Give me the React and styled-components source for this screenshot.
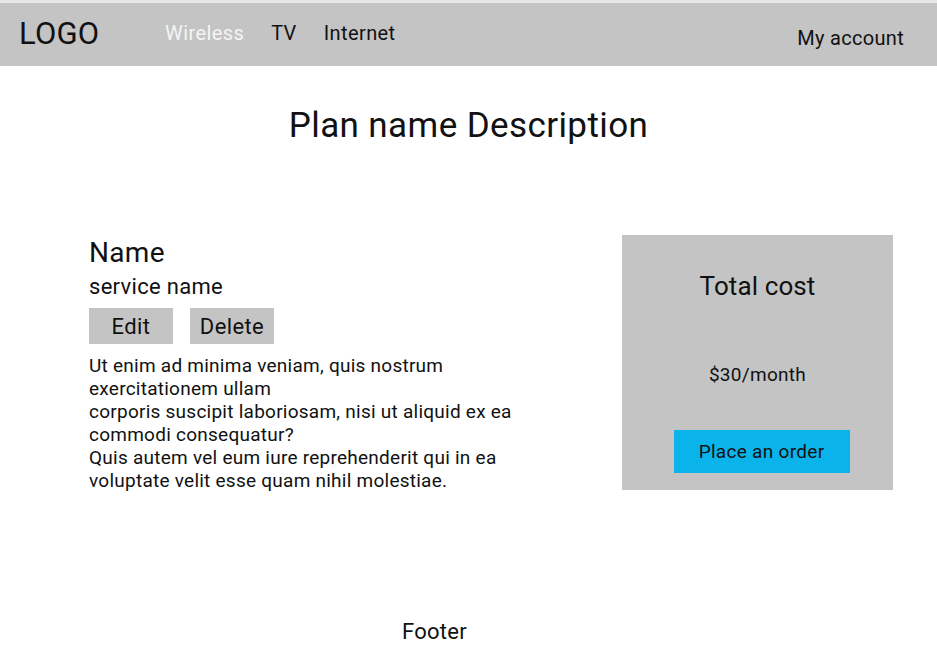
import React from "react";
import styled, { createGlobalStyle } from "styled-components";

const GlobalStyle = createGlobalStyle`
  html, body {
    margin: 0;
    padding: 0;
    background: #ffffff;
    font-family: Roboto, "Liberation Sans", sans-serif;
    color: #111;
  }
`;

const Page = styled.div`
  width: 937px;
  min-height: 671px;
  display: flex;
  flex-direction: column;
  border-top: 3px solid #e6e6e6;
  box-sizing: border-box;
`;

const Header = styled.header`
  height: 63px;
  background: #c4c4c4;
  display: flex;
  align-items: center;
  padding: 0 33px 0 19px;
`;

const Logo = styled.div`
  font-size: 31px;
  letter-spacing: 0.2px;
  width: 146px;
  margin-top: -2px;
`;

const Nav = styled.nav`
  display: flex;
  gap: 27px;
  flex: 1;
  margin-top: -3px;
`;

const NavLink = styled.a`
  font-size: 20px;
  letter-spacing: 0.4px;
  text-decoration: none;
  color: ${(p) => (p.$active ? "#f4f4f4" : "#111")};
`;

const Account = styled.a`
  font-size: 20px;
  letter-spacing: 0.3px;
  color: #111;
  text-decoration: none;
  margin-top: 6px;
`;

const Title = styled.h1`
  margin: 39px 0 0;
  font-weight: 400;
  font-size: 35px;
  letter-spacing: 0.4px;
  text-align: center;
`;

const Main = styled.main`
  display: flex;
  justify-content: space-between;
  padding: 0 44px 0 89px;
  margin-top: 90px;
`;

const Details = styled.section`
  display: flex;
  flex-direction: column;
`;

const Name = styled.h2`
  margin: 0;
  font-size: 28px;
  letter-spacing: 0.3px;
  font-weight: 400;
  line-height: 34px;
`;

const Service = styled.div`
  font-size: 22px;
  letter-spacing: 0.3px;
  line-height: 26px;
  margin-top: 4px;
`;

const Actions = styled.div`
  display: flex;
  gap: 17px;
  margin-top: 8px;
`;

const Action = styled.button`
  width: 84px;
  height: 36px;
  border: none;
  background: #c4c4c4;
  font-family: inherit;
  font-size: 22px;
  letter-spacing: 0.4px;
  color: #111;
  padding: 0;
`;

const Text = styled.p`
  margin: 10px 0 0;
  font-size: 19px;
  letter-spacing: 0.25px;
  line-height: 23px;
`;

const CostCard = styled.aside`
  width: 271px;
  height: 255px;
  background: #c4c4c4;
  display: flex;
  flex-direction: column;
  align-items: center;
  box-sizing: border-box;
  padding-top: 36px;
  margin-top: -1px;
`;

const CostTitle = styled.div`
  font-size: 26px;
  letter-spacing: 0.1px;
  line-height: 30px;
`;

const Price = styled.div`
  font-size: 19px;
  letter-spacing: 0.3px;
  margin-top: 63px;
  line-height: 22px;
`;

const OrderButton = styled.button`
  margin: 44px 0 0 8px;
  width: 176px;
  height: 43px;
  border: none;
  background: #0ab3ea;
  font-family: inherit;
  font-size: 19px;
  letter-spacing: 0.3px;
  color: #111;
  padding: 0;
`;

const Footer = styled.footer`
  margin-top: auto;
  padding: 0 68px 27px 0;
  text-align: center;
  font-size: 22px;
  letter-spacing: 0.3px;
`;

const App = () => {
  return (
    <>
      <GlobalStyle />
      <Page>
        <Header>
          <Logo>LOGO</Logo>
          <Nav>
            <NavLink href="#" $active>Wireless</NavLink>
            <NavLink href="#">TV</NavLink>
            <NavLink href="#">Internet</NavLink>
          </Nav>
          <Account href="#">My account</Account>
        </Header>

        <Title>Plan name Description</Title>

        <Main>
          <Details>
            <Name>Name</Name>
            <Service>service name</Service>
            <Actions>
              <Action>Edit</Action>
              <Action>Delete</Action>
            </Actions>
            <Text>
              Ut enim ad minima veniam, quis nostrum
              <br />
              exercitationem ullam
              <br />
              corporis suscipit laboriosam, nisi ut aliquid ex ea
              <br />
              commodi consequatur?
              <br />
              Quis autem vel eum iure reprehenderit qui in ea
              <br />
              voluptate velit esse quam nihil molestiae.
            </Text>
          </Details>

          <CostCard>
            <CostTitle>Total cost</CostTitle>
            <Price>$30/month</Price>
            <OrderButton>Place an order</OrderButton>
          </CostCard>
        </Main>

        <Footer>Footer</Footer>
      </Page>
    </>
  );
};

export default App;
